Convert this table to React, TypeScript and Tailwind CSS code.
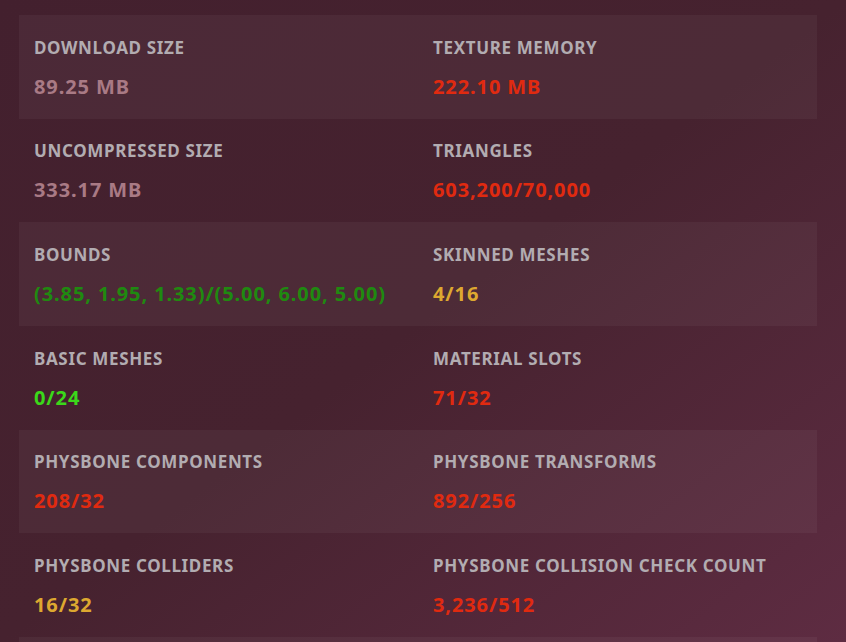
import React from 'react';

type Stat = { label: string; value: string; color: string };

const rows: [Stat, Stat][] = [
  [
    { label: 'Download Size', value: '89.25 MB', color: 'text-[#a97a85]' },
    { label: 'Texture Memory', value: '222.10 MB', color: 'text-[#e02a10]' },
  ],
  [
    { label: 'Uncompressed Size', value: '333.17 MB', color: 'text-[#a97a85]' },
    { label: 'Triangles', value: '603,200/70,000', color: 'text-[#e02a10]' },
  ],
  [
    { label: 'Bounds', value: '(3.85, 1.95, 1.33)/(5.00, 6.00, 5.00)', color: 'text-[#1f8a10]' },
    { label: 'Skinned Meshes', value: '4/16', color: 'text-[#dda830]' },
  ],
  [
    { label: 'Basic Meshes', value: '0/24', color: 'text-[#3bd81a]' },
    { label: 'Material Slots', value: '71/32', color: 'text-[#e02a10]' },
  ],
  [
    { label: 'PhysBone Components', value: '208/32', color: 'text-[#e02a10]' },
    { label: 'PhysBone Transforms', value: '892/256', color: 'text-[#e02a10]' },
  ],
  [
    { label: 'PhysBone Colliders', value: '16/32', color: 'text-[#dda830]' },
    { label: 'PhysBone Collision Check Count', value: '3,236/512', color: 'text-[#e02a10]' },
  ],
];

const StatCell: React.FC<{ stat: Stat }> = ({ stat }) => (
  <div className="flex flex-col">
    <span className="text-[17px] font-bold uppercase leading-[20px] tracking-[0.65px] text-[#b2acb1]">
      {stat.label}
    </span>
    <span className={`mt-[17px] text-[20px] font-bold leading-[24px] tracking-[0.9px] ${stat.color}`}>
      {stat.value}
    </span>
  </div>
);

export default function App() {
  return (
    <div
      className="h-[642px] w-[846px] overflow-hidden bg-gradient-to-br from-[#43202e] via-[#46222f] to-[#5e2c42] pl-[19px] pr-[29px] pt-[15px]"
      style={{ fontFamily: '"Noto Sans", "Open Sans", sans-serif' }}
    >
      <div className="flex flex-col">
        {rows.map((row, i) => (
          <div
            key={i}
            className={`grid h-[103.67px] shrink-0 grid-cols-2 gap-x-[30px] px-[15px] pt-[22.6px] ${
              i % 2 === 0 ? 'bg-white/[0.045]' : ''
            }`}
          >
            <StatCell stat={row[0]} />
            <StatCell stat={row[1]} />
          </div>
        ))}
        <div className="h-[103.67px] shrink-0 bg-white/[0.045]" />
      </div>
    </div>
  );
}
